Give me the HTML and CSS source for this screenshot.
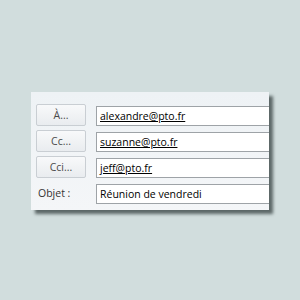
FILE: index.html
```html
<!DOCTYPE html>
<html lang="fr">
<head>
    <meta charset="UTF-8">
    <title>Message</title>
    <link rel="stylesheet" href="styles.css">
</head>
<body>
    <div class="panel">
        <button class="btn">À...</button>
        <div class="field"><u>alexandre@pto.fr</u></div>

        <button class="btn">Cc...</button>
        <div class="field"><u>suzanne@pto.fr</u></div>

        <button class="btn">Cci...</button>
        <div class="field"><u>jeff@pto.fr</u></div>

        <span class="label">Objet :</span>
        <div class="field">Réunion de vendredi</div>
    </div>
</body>
</html>
```
FILE: styles.css
```css
body {
    margin: 0;
    width: 300px;
    height: 300px;
    background-color: #d1dddd;
    font-family: "Open Sans", sans-serif;
    font-size: 10.5px;
    color: #1e1e1e;
}
.panel {
    margin: 92px 0 0 31px;
    width: 238px;
    height: 118px;
    box-sizing: border-box;
    padding: 12px 0 0 5px;
    background: linear-gradient(#eef2f5, #f4f6f8);
    box-shadow: 4px 4px 3px #5d6868;
    display: grid;
    grid-template-columns: 50px 1fr;
    grid-auto-rows: 22px;
    column-gap: 10px;
    row-gap: 4px;
    align-items: end;
}
.btn {
    width: 50px;
    height: 22px;
    margin: 0;
    padding: 0;
    border: 1px solid #c9ced3;
    border-radius: 2px;
    background: linear-gradient(#f8f9fa, #e9ecef);
    font: inherit;
    color: #4a4a4a;
}
.label {
    align-self: center;
    padding-left: 2px;
    color: #333;
}
.field {
    height: 20px;
    box-sizing: border-box;
    border: 1px solid #9ea3a7;
    border-right: none;
    background: #fff;
    padding-left: 3px;
    line-height: 18px;
    color: #000;
}
```
